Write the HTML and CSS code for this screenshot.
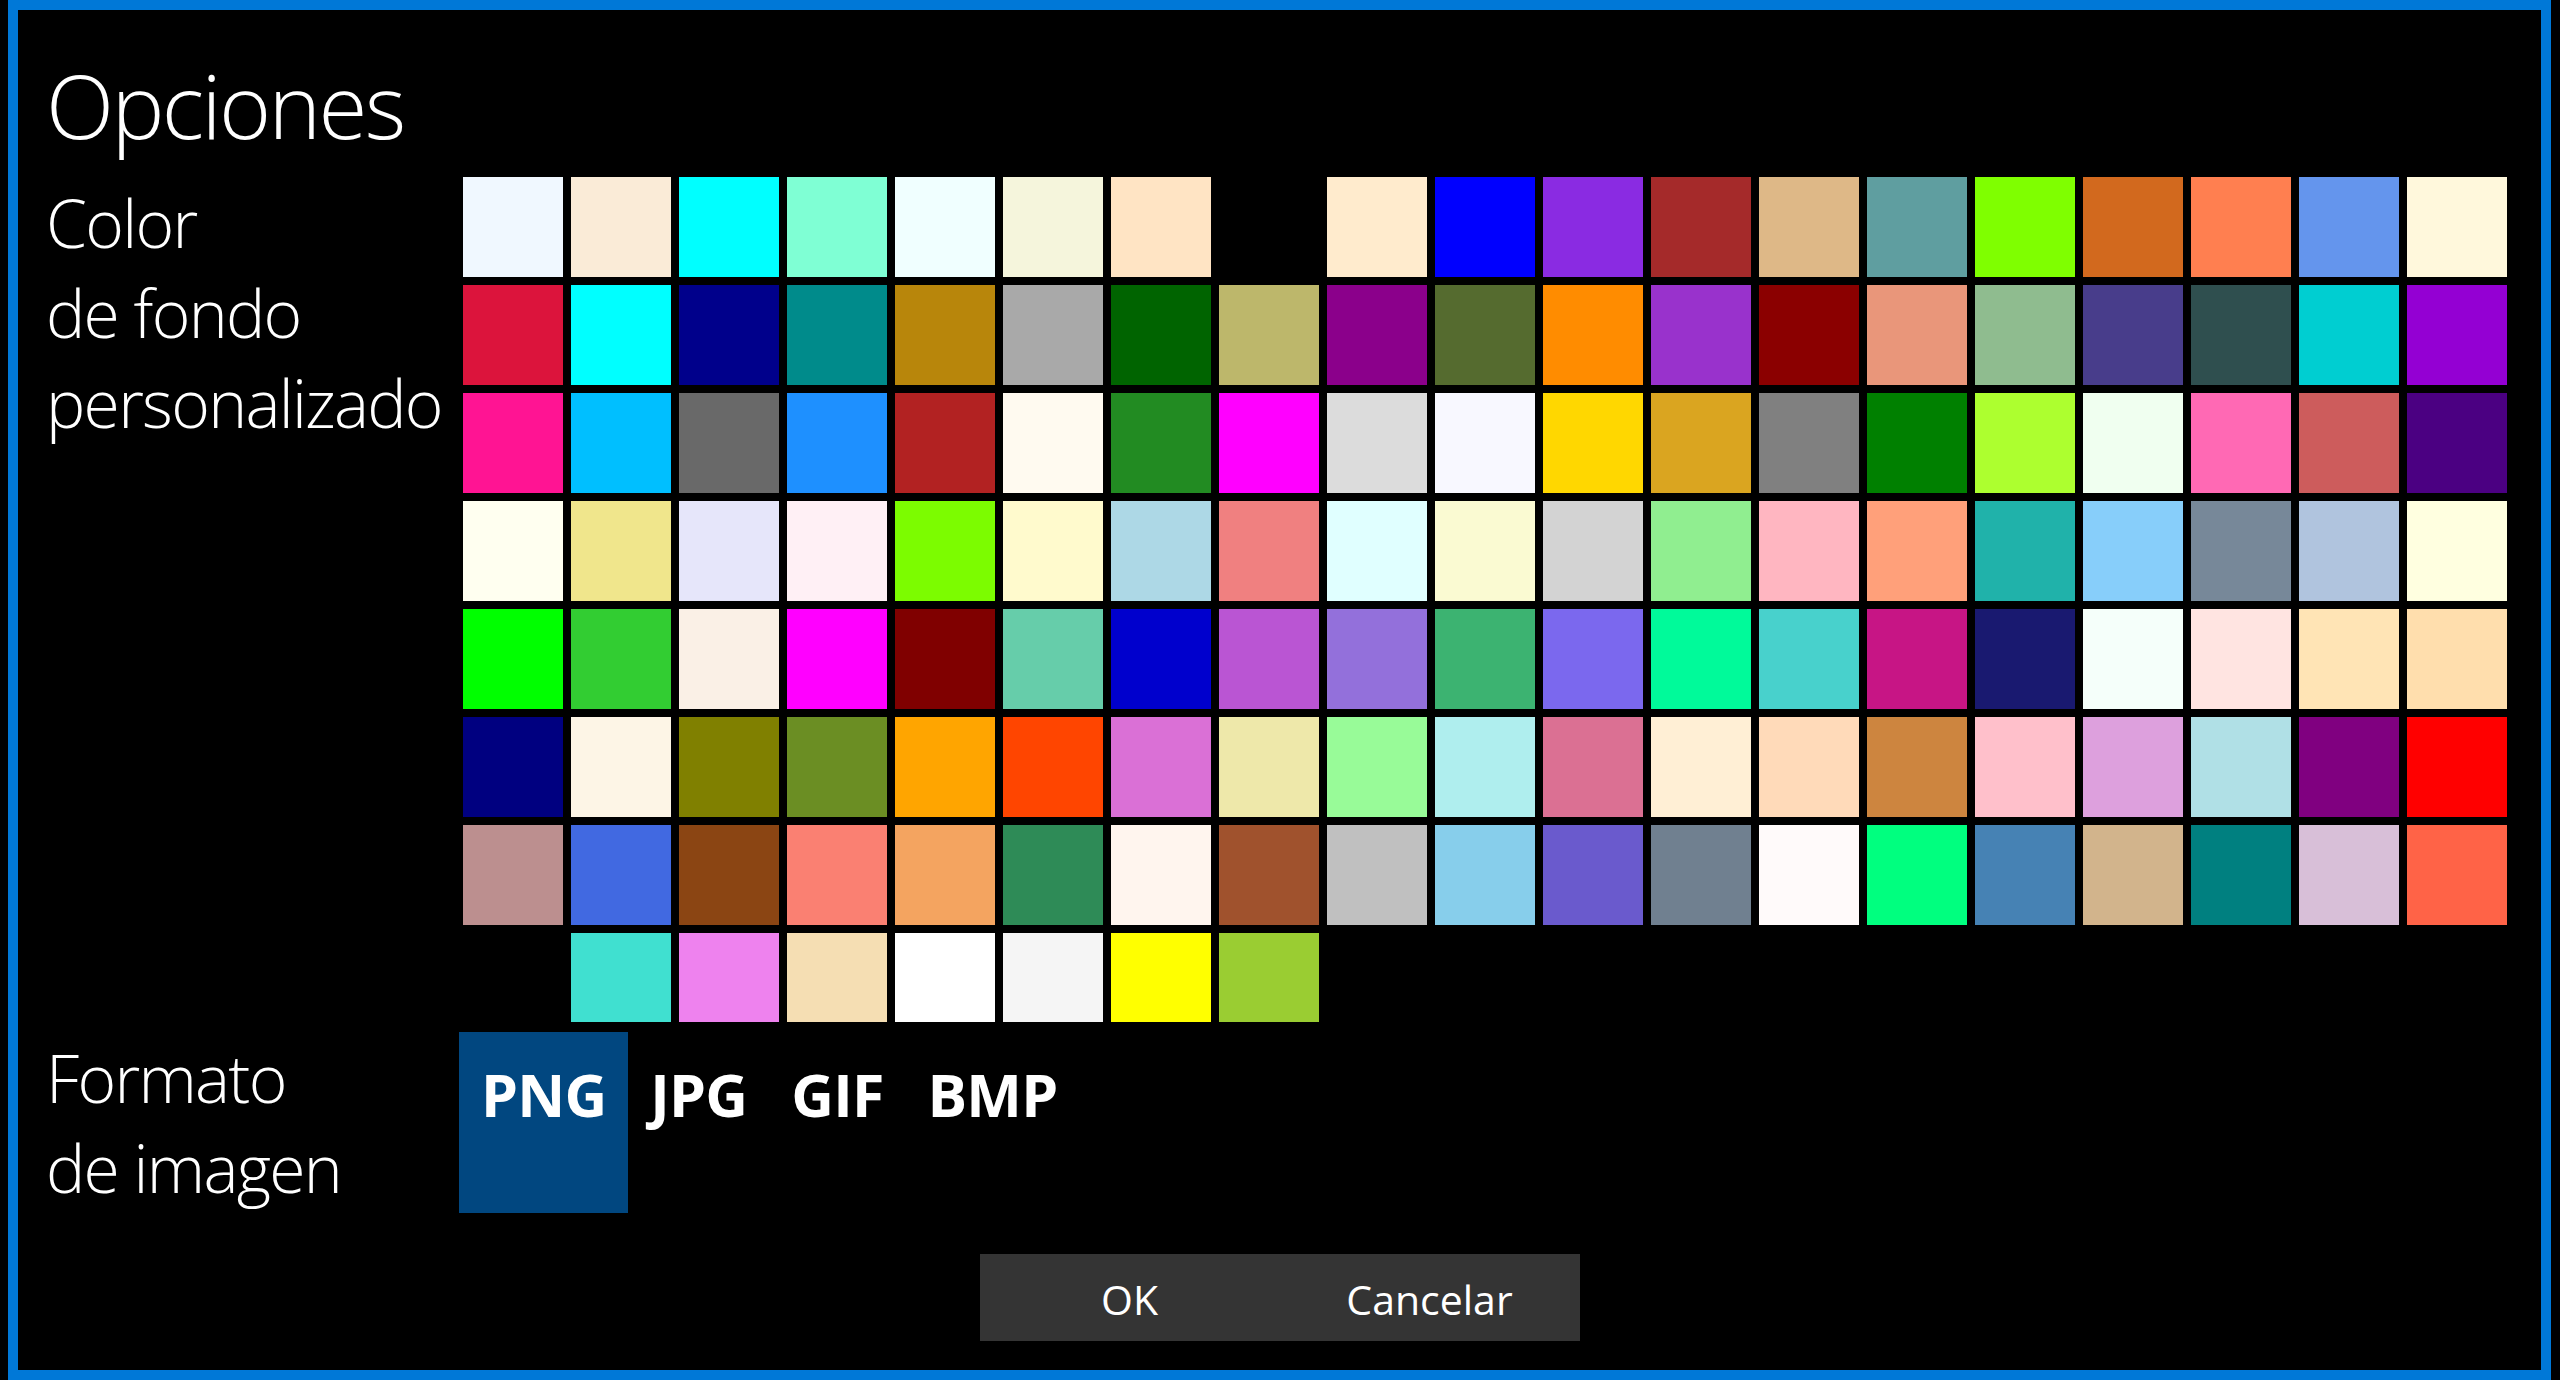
FILE: index.html
```html
<!DOCTYPE html>
<html lang="es">
<head>
<meta charset="utf-8">
<title>Opciones</title>
<link rel="stylesheet" href="styles.css">
</head>
<body>
<div class="window">
  <h1 class="title">Opciones</h1>
  <div class="form">
    <div class="label">Color<br>de fondo<br>personalizado</div>
    <div class="panel">
      <div class="swatches">
        <div class="sw" style="background:#F0F8FF"></div>
        <div class="sw" style="background:#FAEBD7"></div>
        <div class="sw" style="background:#00FFFF"></div>
        <div class="sw" style="background:#7FFFD4"></div>
        <div class="sw" style="background:#F0FFFF"></div>
        <div class="sw" style="background:#F5F5DC"></div>
        <div class="sw" style="background:#FFE4C4"></div>
        <div class="sw" style="background:#000000"></div>
        <div class="sw" style="background:#FFEBCD"></div>
        <div class="sw" style="background:#0000FF"></div>
        <div class="sw" style="background:#8A2BE2"></div>
        <div class="sw" style="background:#A52A2A"></div>
        <div class="sw" style="background:#DEB887"></div>
        <div class="sw" style="background:#5F9EA0"></div>
        <div class="sw" style="background:#7FFF00"></div>
        <div class="sw" style="background:#D2691E"></div>
        <div class="sw" style="background:#FF7F50"></div>
        <div class="sw" style="background:#6495ED"></div>
        <div class="sw" style="background:#FFF8DC"></div>

        <div class="sw" style="background:#DC143C"></div>
        <div class="sw" style="background:#00FFFF"></div>
        <div class="sw" style="background:#00008B"></div>
        <div class="sw" style="background:#008B8B"></div>
        <div class="sw" style="background:#B8860B"></div>
        <div class="sw" style="background:#A9A9A9"></div>
        <div class="sw" style="background:#006400"></div>
        <div class="sw" style="background:#BDB76B"></div>
        <div class="sw" style="background:#8B008B"></div>
        <div class="sw" style="background:#556B2F"></div>
        <div class="sw" style="background:#FF8C00"></div>
        <div class="sw" style="background:#9932CC"></div>
        <div class="sw" style="background:#8B0000"></div>
        <div class="sw" style="background:#E9967A"></div>
        <div class="sw" style="background:#8FBC8F"></div>
        <div class="sw" style="background:#483D8B"></div>
        <div class="sw" style="background:#2F4F4F"></div>
        <div class="sw" style="background:#00CED1"></div>
        <div class="sw" style="background:#9400D3"></div>

        <div class="sw" style="background:#FF1493"></div>
        <div class="sw" style="background:#00BFFF"></div>
        <div class="sw" style="background:#696969"></div>
        <div class="sw" style="background:#1E90FF"></div>
        <div class="sw" style="background:#B22222"></div>
        <div class="sw" style="background:#FFFAF0"></div>
        <div class="sw" style="background:#228B22"></div>
        <div class="sw" style="background:#FF00FF"></div>
        <div class="sw" style="background:#DCDCDC"></div>
        <div class="sw" style="background:#F8F8FF"></div>
        <div class="sw" style="background:#FFD700"></div>
        <div class="sw" style="background:#DAA520"></div>
        <div class="sw" style="background:#808080"></div>
        <div class="sw" style="background:#008000"></div>
        <div class="sw" style="background:#ADFF2F"></div>
        <div class="sw" style="background:#F0FFF0"></div>
        <div class="sw" style="background:#FF69B4"></div>
        <div class="sw" style="background:#CD5C5C"></div>
        <div class="sw" style="background:#4B0082"></div>

        <div class="sw" style="background:#FFFFF0"></div>
        <div class="sw" style="background:#F0E68C"></div>
        <div class="sw" style="background:#E6E6FA"></div>
        <div class="sw" style="background:#FFF0F5"></div>
        <div class="sw" style="background:#7CFC00"></div>
        <div class="sw" style="background:#FFFACD"></div>
        <div class="sw" style="background:#ADD8E6"></div>
        <div class="sw" style="background:#F08080"></div>
        <div class="sw" style="background:#E0FFFF"></div>
        <div class="sw" style="background:#FAFAD2"></div>
        <div class="sw" style="background:#D3D3D3"></div>
        <div class="sw" style="background:#90EE90"></div>
        <div class="sw" style="background:#FFB6C1"></div>
        <div class="sw" style="background:#FFA07A"></div>
        <div class="sw" style="background:#20B2AA"></div>
        <div class="sw" style="background:#87CEFA"></div>
        <div class="sw" style="background:#778899"></div>
        <div class="sw" style="background:#B0C4DE"></div>
        <div class="sw" style="background:#FFFFE0"></div>

        <div class="sw" style="background:#00FF00"></div>
        <div class="sw" style="background:#32CD32"></div>
        <div class="sw" style="background:#FAF0E6"></div>
        <div class="sw" style="background:#FF00FF"></div>
        <div class="sw" style="background:#800000"></div>
        <div class="sw" style="background:#66CDAA"></div>
        <div class="sw" style="background:#0000CD"></div>
        <div class="sw" style="background:#BA55D3"></div>
        <div class="sw" style="background:#9370DB"></div>
        <div class="sw" style="background:#3CB371"></div>
        <div class="sw" style="background:#7B68EE"></div>
        <div class="sw" style="background:#00FA9A"></div>
        <div class="sw" style="background:#48D1CC"></div>
        <div class="sw" style="background:#C71585"></div>
        <div class="sw" style="background:#191970"></div>
        <div class="sw" style="background:#F5FFFA"></div>
        <div class="sw" style="background:#FFE4E1"></div>
        <div class="sw" style="background:#FFE4B5"></div>
        <div class="sw" style="background:#FFDEAD"></div>

        <div class="sw" style="background:#000080"></div>
        <div class="sw" style="background:#FDF5E6"></div>
        <div class="sw" style="background:#808000"></div>
        <div class="sw" style="background:#6B8E23"></div>
        <div class="sw" style="background:#FFA500"></div>
        <div class="sw" style="background:#FF4500"></div>
        <div class="sw" style="background:#DA70D6"></div>
        <div class="sw" style="background:#EEE8AA"></div>
        <div class="sw" style="background:#98FB98"></div>
        <div class="sw" style="background:#AFEEEE"></div>
        <div class="sw" style="background:#DB7093"></div>
        <div class="sw" style="background:#FFEFD5"></div>
        <div class="sw" style="background:#FFDAB9"></div>
        <div class="sw" style="background:#CD853F"></div>
        <div class="sw" style="background:#FFC0CB"></div>
        <div class="sw" style="background:#DDA0DD"></div>
        <div class="sw" style="background:#B0E0E6"></div>
        <div class="sw" style="background:#800080"></div>
        <div class="sw" style="background:#FF0000"></div>

        <div class="sw" style="background:#BC8F8F"></div>
        <div class="sw" style="background:#4169E1"></div>
        <div class="sw" style="background:#8B4513"></div>
        <div class="sw" style="background:#FA8072"></div>
        <div class="sw" style="background:#F4A460"></div>
        <div class="sw" style="background:#2E8B57"></div>
        <div class="sw" style="background:#FFF5EE"></div>
        <div class="sw" style="background:#A0522D"></div>
        <div class="sw" style="background:#C0C0C0"></div>
        <div class="sw" style="background:#87CEEB"></div>
        <div class="sw" style="background:#6A5ACD"></div>
        <div class="sw" style="background:#708090"></div>
        <div class="sw" style="background:#FFFAFA"></div>
        <div class="sw" style="background:#00FF7F"></div>
        <div class="sw" style="background:#4682B4"></div>
        <div class="sw" style="background:#D2B48C"></div>
        <div class="sw" style="background:#008080"></div>
        <div class="sw" style="background:#D8BFD8"></div>
        <div class="sw" style="background:#FF6347"></div>

        <div class="sw" style="background:transparent"></div>
        <div class="sw" style="background:#40E0D0"></div>
        <div class="sw" style="background:#EE82EE"></div>
        <div class="sw" style="background:#F5DEB3"></div>
        <div class="sw" style="background:#FFFFFF"></div>
        <div class="sw" style="background:#F5F5F5"></div>
        <div class="sw" style="background:#FFFF00"></div>
        <div class="sw" style="background:#9ACD32"></div>
      </div>
    </div>

    <div class="label">Formato<br>de imagen</div>
    <div class="formats">
      <div class="fmt selected">PNG</div>
      <div class="fmt">JPG</div>
      <div class="fmt">GIF</div>
      <div class="fmt">BMP</div>
    </div>
  </div>
  <div class="actions">
    <div class="btn">OK</div>
    <div class="btn">Cancelar</div>
  </div>
</div>
</body>
</html>
```

FILE: styles.css
```css
html, body {
  margin: 0;
  padding: 0;
  background: #000;
}

body {
  width: 2560px;
  height: 1380px;
  overflow: hidden;
  color: #fff;
  font-family: "Open Sans", "Noto Sans", "DejaVu Sans", sans-serif;
}

.window {
  box-sizing: border-box;
  margin-left: 8px;
  width: 2543px;
  height: 1380px;
  border: 10px solid #0078D7;
  background: #000;
  padding: 40px 28px 0 28px;
  display: flex;
  flex-direction: column;
}

.title {
  margin: 0;
  font-size: 89px;
  font-weight: 300;
  line-height: 110px;
  height: 110px;
  letter-spacing: -2.6px;
}

.form {
  margin-top: 17px;
  display: grid;
  grid-template-columns: 417px auto;
  row-gap: 10px;
  align-items: start;
}

.label {
  font-size: 66px;
  font-weight: 300;
  line-height: 90px;
  letter-spacing: -1.7px;
  white-space: nowrap;
}

.panel {
  height: 845px;
  overflow: hidden;
}

.swatches {
  display: grid;
  grid-template-columns: repeat(19, 100px);
  grid-auto-rows: 100px;
  gap: 8px;
}

.sw {
  width: 100px;
  height: 100px;
}

.formats {
  display: flex;
  align-self: stretch;
  margin-left: -4px;
}

.fmt {
  box-sizing: border-box;
  height: 181px;
  padding: 22px 22px 0 22px;
  font-size: 59px;
  font-weight: 700;
  line-height: 80px;
  letter-spacing: -0.8px;
}

.fmt.selected {
  background: #014780;
}

.actions {
  margin: 41px auto 0 auto;
  width: 600px;
  height: 87px;
  background: #343434;
  display: flex;
}

.btn {
  flex: 1;
  text-align: center;
  font-size: 41px;
  line-height: 87px;
  padding-top: 2px;
  box-sizing: border-box;
}
```
